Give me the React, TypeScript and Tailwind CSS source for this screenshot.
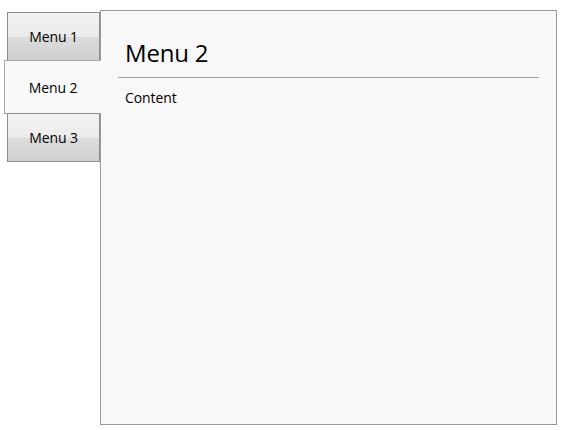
export default function App() {
  const font = { fontFamily: '"Open Sans", "Noto Sans", sans-serif' };

  return (
    <div className="w-[562px] h-[430px] bg-white flex pt-[10px] pl-[4px] text-black" style={font}>
      <div className="flex flex-col w-[96px] pt-[2px] relative z-10">
        <div className="ml-[3px] h-[49px] border border-[#8e8e8e] bg-[linear-gradient(#f2f2f2_0%,#ebebeb_50%,#dddddd_50%,#cfcfcf_100%)] flex items-center justify-center text-[14px] tracking-[-0.1px]">
          Menu 1
        </div>
        <div className="-mr-px h-[54px] -mt-px border border-r-0 border-[#a6a6a6] bg-[#f9f9f9] flex items-center justify-center text-[14px] tracking-[-0.1px]">
          Menu 2
        </div>
        <div className="ml-[3px] -mt-px h-[49px] border border-[#8e8e8e] bg-[linear-gradient(#f2f2f2_0%,#ebebeb_50%,#dddddd_50%,#cfcfcf_100%)] flex items-center justify-center text-[14px] tracking-[-0.1px]">
          Menu 3
        </div>
      </div>
      <div className="w-[457px] h-[415px] border border-[#999999] bg-[#f8f8f8] px-[17px] pt-[25px]">
        <h1 className="px-[7px] text-[24px] leading-[33px] tracking-[-0.2px]">Menu 2</h1>
        <div className="mt-[8px] h-px bg-[#a0a0a0]" />
        <p className="px-[7px] mt-[10px] text-[14px] leading-[20px] tracking-[-0.1px]">Content</p>
      </div>
    </div>
  );
}
